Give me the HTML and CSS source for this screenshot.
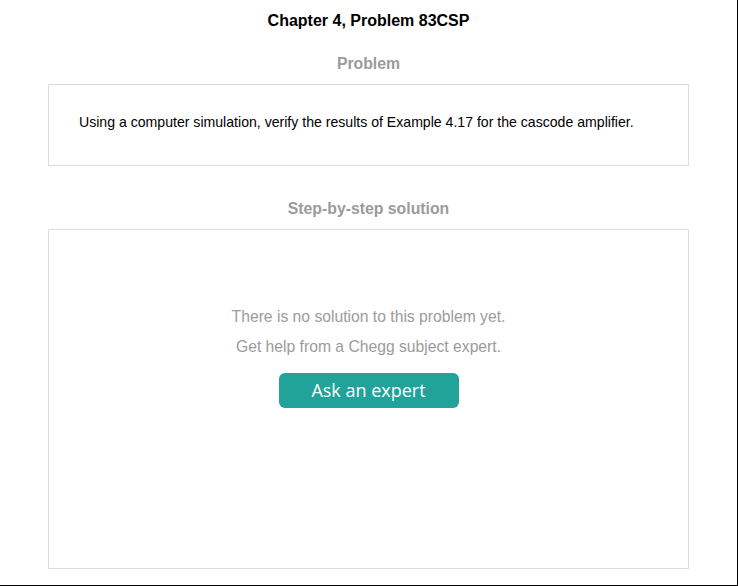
FILE: index.html
```html
<!DOCTYPE html>
<html>
<head>
<meta charset="utf-8">
<link rel="stylesheet" href="styles.css">
</head>
<body>
<div class="page">
  <h1 class="title">Chapter 4, Problem 83CSP</h1>
  <h2 class="section-label">Problem</h2>
  <div class="card problem-card">
    <p class="problem-text">Using a computer simulation, verify the results of Example 4.17 for the cascode amplifier.</p>
  </div>
  <h2 class="section-label step-label">Step-by-step solution</h2>
  <div class="card solution-card">
    <p class="empty-line">There is no solution to this problem yet.</p>
    <p class="empty-line">Get help from a Chegg subject expert.</p>
    <button class="ask-btn">Ask an expert</button>
  </div>
</div>
</body>
</html>
```
FILE: styles.css
```css
* { box-sizing: border-box; }
html, body { margin: 0; padding: 0; background: #fff; }
body { font-family: "Liberation Sans", Arial, sans-serif; }
.page {
  width: 738px;
  height: 586px;
  border-right: 1px solid #000;
  border-bottom: 1px solid #000;
  padding: 10px 48px 0 48px;
  display: flex;
  flex-direction: column;
}
.title {
  margin: 0;
  font-size: 16px;
  line-height: 22px;
  font-weight: bold;
  color: #000;
  text-align: center;
}
.section-label {
  margin: 22px 0 10px;
  font-size: 15.8px;
  line-height: 20px;
  font-weight: bold;
  color: #9b9b9b;
  text-align: center;
}
.step-label { margin-top: 33px; }
.card {
  border: 1px solid #dcdcdc;
  background: #fff;
}
.problem-card {
  height: 82px;
  padding: 27px 30px 0;
}
.problem-text {
  margin: 0;
  font-size: 14.1px;
  line-height: 20px;
  color: #000;
}
.solution-card {
  height: 340px;
  padding-top: 72px;
  display: flex;
  flex-direction: column;
  align-items: center;
}
.empty-line {
  margin: 0;
  font-size: 15.7px;
  line-height: 30px;
  color: #9b9b9b;
}
.ask-btn {
  margin-top: 11px;
  width: 180px;
  height: 35px;
  border: none;
  border-radius: 6px;
  background: #21a39a;
  color: #fff;
  font-family: "Open Sans", sans-serif;
  font-size: 18px;
  padding: 0;
  line-height: 35px;
}
```
